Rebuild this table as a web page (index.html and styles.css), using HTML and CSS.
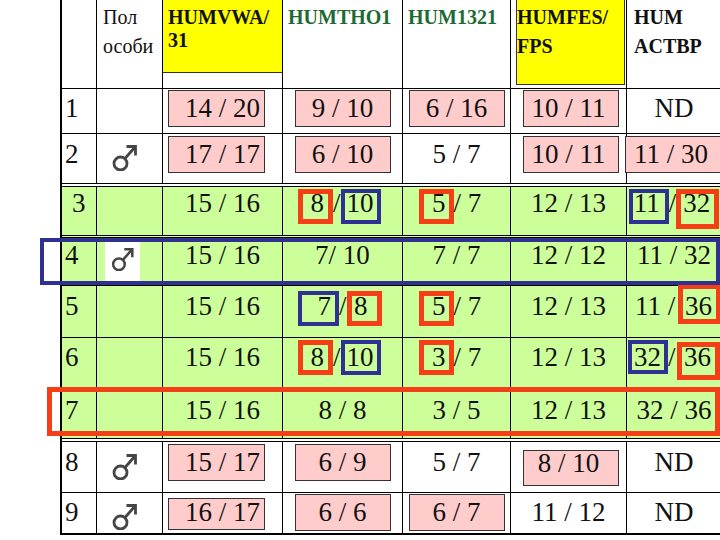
FILE: index.html
```html
<!DOCTYPE html>
<html lang="ru">
<head>
<meta charset="utf-8">
<title>Таблица</title>
<link rel="stylesheet" href="styles.css">
</head>
<body>
<div class="page">
  <div class="tbl">
    <div class="row hdr">
      <div class="cell"></div>
      <div class="cell sex">Пол<br>особи</div>
      <div class="cell yc"><div class="ybox y1">HUMVWA/<br>31</div></div>
      <div class="cell dg">HUMTHO1</div>
      <div class="cell dg">HUM1321</div>
      <div class="cell yc"><div class="ybox y2">HUMFES/<br>FPS</div></div>
      <div class="cell c7h">HUM<br>ACTBP</div>
    </div>

    <div class="row r1">
      <div class="cell lab">1</div>
      <div class="cell"></div>
      <div class="cell c3"><span class="pk">14 / 20</span></div>
      <div class="cell"><span class="pk">9 / 10</span></div>
      <div class="cell"><span class="pk">6 / 16</span></div>
      <div class="cell c6"><span class="pk">10 / 11</span></div>
      <div class="cell">ND</div>
    </div>

    <div class="row r2">
      <div class="cell lab">2</div>
      <div class="cell sx"><svg class="male" viewBox="0 0 27 28"><circle cx="9.5" cy="20.5" r="6.5"/><path d="M14 15.5 L24.5 3.5 M15.5 3.5 H24.5 V12.5"/></svg></div>
      <div class="cell c3"><span class="pk">17 / 17</span></div>
      <div class="cell"><span class="pk">6 / 10</span></div>
      <div class="cell">5 / 7</div>
      <div class="cell c6"><span class="pk">10 / 11</span></div>
      <div class="cell c7 lft"><span class="pk">11 / 30</span></div>
    </div>

    <div class="row r3 g">
      <div class="cell lab">3</div>
      <div class="cell"></div>
      <div class="cell">15 / 16</div>
      <div class="cell sl6"><span class="mk mr h8a">8</span>/<span class="mk mb h10">10</span></div>
      <div class="cell sl13"><span class="mk mr h5">5</span>/ 7</div>
      <div class="cell">12 / 13</div>
      <div class="cell"><span class="mk mb h11">11</span>/<span class="mk mr h32 tall">32</span></div>
    </div>

    <div class="row r4 g">
      <div class="cell lab">4</div>
      <div class="cell sx4"><div class="patch"><svg class="male s" viewBox="0 0 27 28"><circle cx="9.5" cy="20.5" r="6.5"/><path d="M14 15.5 L24.5 3.5 M15.5 3.5 H24.5 V12.5"/></svg></div></div>
      <div class="cell">15 / 16</div>
      <div class="cell">7/ 10</div>
      <div class="cell">7 / 7</div>
      <div class="cell">12 / 12</div>
      <div class="cell">11 / 32</div>
    </div>

    <div class="row r5 g">
      <div class="cell lab">5</div>
      <div class="cell"></div>
      <div class="cell">15 / 16</div>
      <div class="cell sl5"><span class="mk mb h7">7</span>/<span class="mk mr h8b">8</span></div>
      <div class="cell sl13"><span class="mk mr h5">5</span>/ 7</div>
      <div class="cell">12 / 13</div>
      <div class="cell rt">11 /<span class="mk mr h32 up ml3">36</span></div>
    </div>

    <div class="row r6 g">
      <div class="cell lab">6</div>
      <div class="cell"></div>
      <div class="cell">15 / 16</div>
      <div class="cell sl6"><span class="mk mr h8a">8</span>/<span class="mk mb h10">10</span></div>
      <div class="cell sl13"><span class="mk mr h5">3</span>/ 7</div>
      <div class="cell">12 / 13</div>
      <div class="cell"><span class="mk mb h32b b32">32</span>/<span class="mk mr h32 r36 ml2">36</span></div>
    </div>

    <div class="row r7 g">
      <div class="cell lab">7</div>
      <div class="cell"></div>
      <div class="cell">15 / 16</div>
      <div class="cell">8 / 8</div>
      <div class="cell">3 / 5</div>
      <div class="cell">12 / 13</div>
      <div class="cell">32 / 36</div>
    </div>

    <div class="row r8">
      <div class="cell lab">8</div>
      <div class="cell sx"><svg class="male" viewBox="0 0 27 28"><circle cx="9.5" cy="20.5" r="6.5"/><path d="M14 15.5 L24.5 3.5 M15.5 3.5 H24.5 V12.5"/></svg></div>
      <div class="cell c3"><span class="pk">15 / 17</span></div>
      <div class="cell"><span class="pk">6 / 9</span></div>
      <div class="cell">5 / 7</div>
      <div class="cell c6"><span class="pk low">8 / 10</span></div>
      <div class="cell">ND</div>
    </div>

    <div class="row r9">
      <div class="cell lab">9</div>
      <div class="cell sx"><svg class="male" viewBox="0 0 27 28"><circle cx="9.5" cy="20.5" r="6.5"/><path d="M14 15.5 L24.5 3.5 M15.5 3.5 H24.5 V12.5"/></svg></div>
      <div class="cell c3"><span class="pk sh">16 / 17</span></div>
      <div class="cell"><span class="pk">6 / 6</span></div>
      <div class="cell"><span class="pk">6 / 7</span></div>
      <div class="cell">11 / 12</div>
      <div class="cell">ND</div>
    </div>
  </div>

  <div class="hl hl-b"></div>
  <div class="hl hl-r"></div>
</div>
</body>
</html>
```

FILE: styles.css
```css
html, body {
  margin: 0;
  padding: 0;
  overflow: hidden;
  background: #fff;
}
body {
  width: 720px;
  height: 540px;
  font-family: "Liberation Serif", "Times New Roman", serif;
  color: #111;
}
.page {
  position: relative;
  width: 720px;
  height: 540px;
}
.tbl {
  margin-left: 60px;
  width: 662px;
  border-left: 2px solid #000;
}
.row {
  display: grid;
  grid-template-columns: 35px 66px 120px 120px 108px 116px 95px;
  box-sizing: border-box;
  border-bottom: 1px solid #000;
}
.cell {
  border-right: 1px solid #000;
  box-sizing: border-box;
  font-size: 27px;
  line-height: 37px;
  text-align: center;
  white-space: nowrap;
  min-width: 0;
}
.g { background: #ccff99; }

/* header */
.hdr { height: 89px; }
.hdr .cell {
  font-size: 20px;
  font-weight: bold;
  line-height: 29px;
  text-align: left;
  padding: 3px 0 0 5px;
}
.hdr .sex { font-weight: normal; padding-left: 6px; }
.hdr .yc { padding: 0; }
.hdr .c7h { padding-left: 7px; }
.dg { color: #1d6b32; }
.ybox { background: #ffff00; box-sizing: border-box; }
.y1 {
  height: 73px;
  border-bottom: 1px solid #333;
  line-height: 23px;
  padding: 6px 0 0 5px;
}
.y2 {
  margin-left: 5px;
  width: 109px;
  height: 85px;
  border: 1px solid #333;
  border-top: 0;
  padding: 3px 0 0 0;
}

/* rows */
.r1 { height: 45px; }
.r1 .cell { padding-top: 1px; }
.r2 { height: 53px; border-bottom: 4px double #000; }
.r2 .cell { padding-top: 2px; }
.r3 { height: 51px; border-bottom: 3px double #000; }
.r3 .cell { line-height: 33px; }
.r4 { height: 48px; }
.r4 .cell { line-height: 35px; }
.r5 { height: 52px; }
.r5 .cell { padding-top: 2px; }
.r6 { height: 50px; }
.r6 .cell { padding-top: 1px; }
.r7 { height: 54px; border-bottom: 4px double #000; background-clip: padding-box; }
.r7 .cell { padding-top: 4px; }
.r8 { height: 51px; }
.r8 .cell { padding-top: 2px; }
.r9 { height: 42px; border-bottom: 2px solid #000; }
.r9 .cell { padding-top: 1px; }

.lab { text-align: left; padding-left: 3px; }
.r3 .lab { padding-left: 10px; }

/* male symbol */
.row .sx { padding-top: 9px; padding-left: 14px; line-height: 0; }
.r8 .sx { padding-top: 10px; }
.row .sx4 { padding-top: 0; padding-left: 8px; line-height: 0; }
.patch {
  width: 35px;
  height: 100%;
  background: #fff;
  padding: 8px 0 0 5px;
  box-sizing: border-box;
}
.male {
  display: block;
  width: 27px;
  height: 28px;
  fill: none;
  stroke: #454545;
  stroke-width: 2.8;
}
.male.s { width: 25px; height: 25px; }

/* pink boxes */
.pk {
  display: inline-block;
  vertical-align: top;
  box-sizing: border-box;
  width: 96px;
  height: 37px;
  line-height: 35px;
  background: #ffcccc;
  border: 1px solid #333;
}
.c3 .pk { width: 97px; padding-left: 12px; margin-left: -12px; }
.c6 .pk { padding-right: 4px; margin-left: 4px; }
.lft { text-align: left; }
.c7 .pk { width: 110px; text-align: left; padding-left: 8px; margin-left: -2px; }
.pk.low { margin-top: 6px; height: 36px; line-height: 24px; }
.pk.sh { margin-top: 4px; height: 32px; line-height: 27px; }

/* red / blue marks */
.mk { display: inline-block; line-height: 18px; }
.mr { border: 5px solid #f53e16; }
.mb { border: 4px solid #2e3192; }
.r3 .mr { padding-top: 0; padding-bottom: 7px; }
.r3 .mb { padding-top: 1px; padding-bottom: 8px; }
.r5 .mr { padding-top: 1px; padding-bottom: 6px; }
.r5 .mb { padding-top: 2px; padding-bottom: 7px; }
.r6 .mr { padding-top: 3px; padding-bottom: 4px; }
.r6 .mb { padding-top: 4px; padding-bottom: 5px; }
.r3 .mr.tall { padding-bottom: 12px; }
.r5 .mr.up { padding-top: 8px; padding-bottom: 4px; margin-top: -4px; }
.r6 .mb.b32 { padding-bottom: 4px; }
.r6 .mr.r36 { padding-top: 1px; padding-bottom: 9px; }

.h8a { padding-left: 7px; padding-right: 4px; }
.h10 { padding-left: 2px; padding-right: 3px; }
.h5 { padding-left: 8.5px; padding-right: 3px; }
.h7 { padding-left: 15px; padding-right: 4px; }
.h8b { padding-left: 2.5px; padding-right: 9px; }
.h11 { padding-left: 1px; padding-right: 5px; }
.h32 { padding-left: 2px; padding-right: 4px; }
.h32b { padding-left: 2px; padding-right: 3px; }
.ml3 { margin-left: 2.75px; }
.ml2 { margin-left: 1.5px; }

.sl6 { padding-right: 6px; }
.sl5 { padding-right: 5px; }
.sl13 { padding-right: 13px; }
.rt { text-align: right; }

/* highlight frames over rows */
.hl { position: absolute; box-sizing: border-box; }
.hl-b {
  left: 40px;
  top: 238px;
  width: 680px;
  height: 47px;
  border: 4px solid #2e3192;
}
.hl-r {
  left: 47px;
  top: 387px;
  width: 673px;
  height: 49px;
  border: 5px solid #f53e16;
}
```
